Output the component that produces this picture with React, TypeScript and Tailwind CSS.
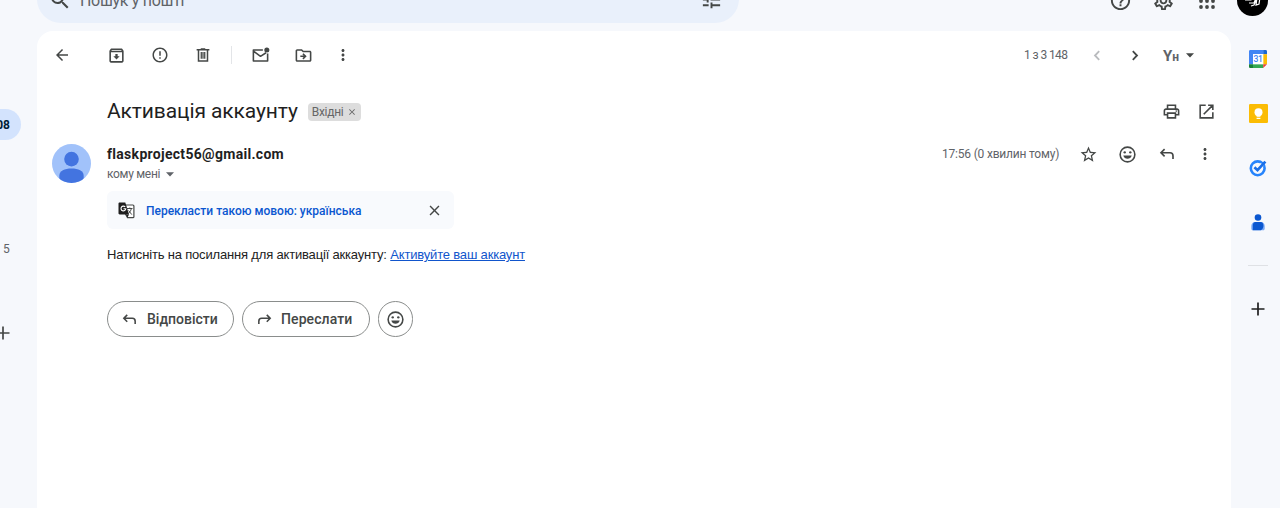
import type { ReactNode } from "react";
import {
  MdArrowBack,
  MdClose,
  MdErrorOutline,
  MdHelpOutline,
  MdMoreVert,
  MdOutlineArchive,
  MdOutlineDriveFileMove,
  MdOutlinePrint,
  MdOutlineSettings,
  MdSearch,
  MdStarOutline,
  MdTune,
} from "react-icons/md";

function Slot({ className, label, children }: { className: string; label: string; children: ReactNode }) {
  return (
    <button aria-label={label} className={`flex shrink-0 items-center justify-center ${className}`}>
      {children}
    </button>
  );
}

function Trash() {
  return (
    <svg width="18" height="18" viewBox="0 0 24 24" fill="none" stroke="currentColor" strokeWidth="2">
      <path d="M3.5 5h17M9 4h6M6 5v15h12V5" />
      <path d="M9.7 8v9M14.3 8v9M12 8v9" strokeWidth="1.7" />
    </svg>
  );
}

function Unread() {
  return (
    <svg width="19" height="19" viewBox="0 0 24 24" fill="none" stroke="currentColor" strokeWidth="2">
      <path d="M15 5H3v14h18V9.5M3 6.5l9 6.5 7-4.5" strokeLinejoin="round" />
      <circle cx="20" cy="5" r="3.2" fill="currentColor" stroke="none" />
    </svg>
  );
}

function Reply({ size, flip }: { size: number; flip?: boolean }) {
  return (
    <svg
      width={size}
      height={size}
      viewBox="0 0 24 24"
      fill="none"
      stroke="currentColor"
      strokeWidth="2.2"
      className={flip ? "-scale-x-100" : ""}
    >
      <path d="M8.8 5.500L4 10.300l4.800 4.800M4 10.300h12a4 4 0 0 1 4 4V18.500" />
    </svg>
  );
}

function Smile({ size }: { size: number }) {
  return (
    <svg width={size} height={size} viewBox="0 0 24 24" fill="currentColor">
      <circle cx="12" cy="12" r="9.300" fill="none" stroke="currentColor" strokeWidth="2" />
      <circle cx="8.500" cy="9.300" r="1.500" />
      <circle cx="15.500" cy="9.300" r="1.500" />
      <path d="M6.700 13.300h10.600c-.8 2.600-2.800 4.200-5.300 4.200s-4.500-1.600-5.300-4.200z" />
    </svg>
  );
}

function OpenNew() {
  return (
    <svg width="19" height="19" viewBox="0 0 24 24" fill="none" stroke="currentColor" strokeWidth="2">
      <path d="M11 4H4v16h16v-7M14 4h6v6M20 4L8.500 15.500" />
    </svg>
  );
}

function AppsGrid() {
  return (
    <svg width="18" height="18" viewBox="0 0 18 18" fill="currentColor">
      {[3, 9, 15].map((y) => [3, 9, 15].map((x) => <circle key={`${x}-${y}`} cx={x} cy={y} r="1.900" />))}
    </svg>
  );
}

function Chevron({ left }: { left?: boolean }) {
  return (
    <svg width="8" height="11" viewBox="0 0 8 11" fill="none" stroke="currentColor" strokeWidth="1.8">
      <path d={left ? "M6.200 1.200L2 5.500l4.200 4.300" : "M1.800 1.200L6 5.500 1.800 9.800"} />
    </svg>
  );
}

function Caret() {
  return (
    <svg width="8" height="5" viewBox="0 0 8 5" fill="currentColor">
      <path d="M0 .3h8L4 4.600z" />
    </svg>
  );
}

function Plus({ size }: { size: number }) {
  return (
    <svg width={size} height={size} viewBox="0 0 14 14" fill="none" stroke="currentColor" strokeWidth="1.7" className="shrink-0">
      <path d="M7 .5v13M.5 7h13" />
    </svg>
  );
}

function PersonAvatar() {
  return (
    <svg width="39" height="39" viewBox="0 0 40 40" className="shrink-0">
      <defs>
        <clipPath id="avatar-disc">
          <circle cx="20" cy="20" r="20" />
        </clipPath>
      </defs>
      <g clipPath="url(#avatar-disc)">
        <rect width="40" height="40" fill="#a1c2fa" />
        <circle cx="20" cy="15.500" r="7.500" fill="#4374e0" />
        <path d="M7.500 32.500c0-4.800 5.500-7.300 12.500-7.300s12.500 2.500 12.500 7.300V40h-25z" fill="#4374e0" />
      </g>
    </svg>
  );
}

function TranslateIcon() {
  return (
    <svg width="17" height="17" viewBox="0 0 17 17" className="shrink-0">
      <path d="M7.500 3h7.400c.6 0 1 .4 1 1v10.700c0 .6-.4 1-1 1H9.500L7.500 12z" fill="#fff" stroke="#444746" strokeWidth="1.200" />
      <path d="M9 6.500h5.500M11.800 5.500v1.200M13.300 6.700c-.4 2-1.700 3.800-3 4.900M10.600 8.500l3.200 4.100" stroke="#444746" strokeWidth="1" fill="none" />
      <path d="M1.700.5h5.600l3.700 12H1.700c-.7 0-1.200-.5-1.200-1.200V1.700C.5 1 1 .5 1.700.5z" fill="#1f1f1f" />
      <path d="M7.200 4.900A2.400 2.400 0 1 0 7.800 6.800H5.500" stroke="#fff" strokeWidth="1.100" fill="none" />
      <path d="M8 12.500h3l-1.500 3z" fill="#1f1f1f" />
    </svg>
  );
}

function CalendarLogo() {
  return (
    <div className="relative flex h-[18px] w-[18px] items-center justify-center">
      <svg width="18" height="18" viewBox="0 0 18 18" className="absolute inset-0">
        <path d="M1.300 0h12.900v4H4v10.200H0V1.300C0 .6.6 0 1.300 0z" fill="#4285f4" />
        <path d="M14.200 0h2.500c.7 0 1.300.6 1.300 1.300v2.900h-3.800z" fill="#1967d2" />
        <path d="M14.200 4.200H18v10h-3.800z" fill="#fbbc04" />
        <path d="M4 14.200h10.200V18H4z" fill="#34a853" />
        <path d="M0 14.200h4V18H1.300C.6 18 0 17.400 0 16.700z" fill="#188038" />
        <path d="M14.200 14.200H18L14.200 18z" fill="#ea4335" />
        <path d="M4 4h10.200v10.200H4z" fill="#fff" />
      </svg>
      <span className="relative text-[8.5px] leading-none font-medium tracking-[-0.4px] text-[#4285f4]">31</span>
    </div>
  );
}

function KeepLogo() {
  return (
    <svg width="19" height="19" viewBox="0 0 19 19">
      <rect width="19" height="19" rx="1.300" fill="#fbbc04" />
      <circle cx="9.500" cy="8.300" r="4" fill="#fff" />
      <path d="M7.600 10h3.800v2.700H7.600zM7.600 13.700h3.800v1.300H7.600z" fill="#fff" />
    </svg>
  );
}

function TasksLogo() {
  return (
    <svg width="18" height="18" viewBox="0 0 18 18" fill="none">
      <circle cx="8.700" cy="9.300" r="6.900" stroke="#2684fc" strokeWidth="2.600" />
      <path d="M8.300 10.800l5-5.500" stroke="#f6f8fc" strokeWidth="4" />
      <path d="M5.400 8.300l3.100 2.900L16.400 2.600" stroke="#1a6fe8" strokeWidth="2.700" />
    </svg>
  );
}

function ContactsLogo() {
  return (
    <svg width="14" height="17" viewBox="0 0 14 17">
      <circle cx="7" cy="3.500" r="3.300" fill="#0b57d0" />
      <path d="M4 8h6c2.300 0 3.700 1.700 3.700 4v2.800c0 .9-.6 1.500-1.500 1.500H1.800c-.9 0-1.500-.6-1.500-1.500V12C.3 9.700 1.700 8 4 8z" fill="#7baaf7" />
      <path d="M4.500 8h5c2 0 2.900 1.700 2.900 3.500 0 2.500-1 4-2.600 4.800H1.800V11.500C1.800 9.500 2.800 8 4.500 8z" fill="#0b57d0" />
    </svg>
  );
}

function Header() {
  return (
    <header className="-mt-[25px] flex h-14 shrink-0 items-start pl-[37px] text-[#444746]">
      <div className="flex h-12 w-[702px] items-center rounded-full bg-[#e9f0fb] pl-[11px]">
        <MdSearch size={24} className="mt-px shrink-0" />
        <span className="mt-[3px] ml-2 w-[400px] text-[16px] tracking-[-0.3px] whitespace-nowrap text-[#5f6368]">Пошук у пошті</span>
        <MdTune size={23} className="mr-[16px] ml-auto" />
      </div>
      <div className="ml-auto flex h-12 items-center pt-[3px]">
        <Slot label="Довідка" className="w-[43px]"><MdHelpOutline size={23} /></Slot>
        <Slot label="Налаштування" className="w-[43px]"><MdOutlineSettings size={23} /></Slot>
        <Slot label="Додатки" className="w-[43px]"><AppsGrid /></Slot>
        <div className="mr-3 ml-[9px] flex h-[31px] w-[31px] items-center justify-center rounded-full bg-black">
          <svg width="17" height="14" viewBox="0 0 17 14" fill="none" stroke="#fff" strokeWidth="1.200">
            <path d="M1 6h6l2-4M5 9h5l2-5M7 12l3-1 3-7-1 7 3-1 1-7" />
          </svg>
        </div>
      </div>
    </header>
  );
}

function Toolbar() {
  return (
    <div className="flex h-12 items-center pl-[5px] text-[#444746]">
      <Slot label="Назад" className="w-10"><MdArrowBack size={18} /></Slot>
      <Slot label="Архівувати" className="ml-[13px] w-[43px]"><MdOutlineArchive size={19} /></Slot>
      <Slot label="Спам" className="w-[43px]"><MdErrorOutline size={18} /></Slot>
      <Slot label="Видалити" className="w-[43px]"><Trash /></Slot>
      <div className="ml-[7px] h-[18px] w-px bg-[#e3e5e8]" />
      <Slot label="Непрочитане" className="ml-[7px] w-[43px]"><Unread /></Slot>
      <Slot label="Перемістити" className="w-[43px]"><MdOutlineDriveFileMove size={19} /></Slot>
      <Slot label="Більше" className="w-[35px]"><MdMoreVert size={18} /></Slot>
      <span className="ml-auto w-11 text-[12px] tracking-[-0.6px] whitespace-nowrap text-[#5f6368]">1 з 3 148</span>
      <Slot label="Новіші" className="ml-[10px] w-[38px] text-[#b9bbbe]"><Chevron left /></Slot>
      <Slot label="Старіші" className="w-[38px]"><Chevron /></Slot>
      <span className="ml-[9px] w-[23px] pt-[3px] text-[15px] leading-none font-bold text-[#5f6368]">
        Y<span className="text-[12px]">н</span>
      </span>
      <div className="mr-[37px]"><Caret /></div>
    </div>
  );
}

function Message() {
  return (
    <>
      <div className="flex h-[65px] items-center pl-[70px]">
        <h1 className="text-[21px] tracking-[-0.1px] whitespace-nowrap text-[#1f1f1f]">Активація аккаунту</h1>
        <div className="ml-[10px] flex h-[18px] w-[53px] shrink-0 items-center rounded-[4px] bg-[#dddddd] pl-1 text-[12px] tracking-[-0.3px] whitespace-nowrap text-[#666]">
          <span>Вхідні</span>
          <MdClose size={10} className="ml-[4px] shrink-0" />
        </div>
        <div className="mr-[7px] ml-auto flex text-[#444746]">
          <Slot label="Друк" className="w-9"><MdOutlinePrint size={19} /></Slot>
          <Slot label="Нове вікно" className="w-[35px]"><OpenNew /></Slot>
        </div>
      </div>
      <div className="flex h-[46px] pl-[15px]">
        <PersonAvatar />
        <div className="ml-4 whitespace-nowrap">
          <p className="h-5 text-[14px] leading-5 font-bold tracking-[0.3px] text-[#1f1f1f]">flaskproject56@gmail.com</p>
          <div className="flex h-5 items-center text-[12px] tracking-[-0.3px] text-[#5f6368]">
            <span className="w-[59px]">кому мені</span>
            <Caret />
          </div>
        </div>
        <div className="mr-[7px] ml-auto flex h-5 items-center text-[#444746]">
          <span className="mr-[10px] w-[117px] text-[12px] tracking-[-0.2px] whitespace-nowrap text-[#5f6368]">17:56 (0 хвилин тому)</span>
          <Slot label="Позначити" className="w-[39px]"><MdStarOutline size={19} /></Slot>
          <Slot label="Реакція" className="w-[39px]"><Smile size={19} /></Slot>
          <Slot label="Відповісти" className="w-[39px]"><Reply size={18} /></Slot>
          <Slot label="Більше" className="w-[38px]"><MdMoreVert size={18} /></Slot>
        </div>
      </div>
      <div className="ml-[70px]">
        <div className="mt-px flex h-[38px] w-[347px] items-center rounded-[6px] bg-[#f8fafd] pl-[11px]">
          <TranslateIcon />
          <span className="mt-px ml-[11px] text-[12px] font-medium whitespace-nowrap text-[#0b57d0]">Перекласти такою мовою: українська</span>
          <MdClose size={17} className="mr-[11px] ml-auto text-[#444746]" />
        </div>
        <p className="mt-[17px] h-[18px] font-['Liberation_Sans',Arial,sans-serif] text-[13px] leading-[18px] tracking-[-0.175px] whitespace-nowrap text-[#222]">
          Натисніть на посилання для активації аккаунту: <a href="#activate" className="text-[#1155cc] underline">Активуйте ваш аккаунт</a>
        </p>
        <div className="mt-[37px] flex gap-2 text-[14px] font-medium whitespace-nowrap text-[#444746]">
          <button className="flex h-9 w-[127px] items-center rounded-full border border-[#8a8d8c] pl-[13px]">
            <Reply size={17} /><span className="ml-[9px]">Відповісти</span>
          </button>
          <button className="flex h-9 w-32 items-center rounded-full border border-[#8a8d8c] pl-[13px]">
            <Reply size={17} flip /><span className="ml-2 tracking-[0.1px]">Переслати</span>
          </button>
          <button aria-label="Додати реакцію" className="flex h-9 w-[35px] items-center justify-center rounded-full border border-[#8a8d8c]">
            <Smile size={19} />
          </button>
        </div>
      </div>
    </>
  );
}

export default function App() {
  return (
    <div className="flex h-[508px] w-[1280px] flex-col overflow-hidden bg-[#f6f8fc] font-[Roboto,'Noto_Sans',sans-serif]">
      <Header />
      <div className="flex min-h-0 flex-1">
        <aside className="flex w-[37px] shrink-0 flex-col overflow-hidden text-[12px]">
          <div className="mt-[78px] flex h-[31px] w-[21px] items-center justify-end rounded-r-full bg-[#d3e3fd] pr-[11px] font-bold text-[#001d35]">08</div>
          <span className="mt-[100px] ml-[3px] h-[18px] leading-[18px] text-[#5f6368]">5</span>
          <div className="mt-[68px] -ml-[4px] text-[#444746]"><Plus size={14} /></div>
        </aside>
        <main className="w-[1194px] shrink-0 rounded-t-2xl bg-white">
          <Toolbar />
          <Message />
        </main>
        <aside className="flex w-[49px] shrink-0 flex-col items-center pl-[5px]">
          <div className="mt-[19px] flex h-[18px] items-center"><CalendarLogo /></div>
          <div className="mt-[36px] flex h-[19px] items-center"><KeepLogo /></div>
          <div className="mt-[36px] flex h-[18px] items-center"><TasksLogo /></div>
          <div className="mt-[37px] flex h-[17px] items-center"><ContactsLogo /></div>
          <div className="mt-[34px] h-px w-5 bg-[#dfe1e5]" />
          <div className="mt-[36px] text-[#1f1f1f]"><Plus size={14} /></div>
        </aside>
      </div>
    </div>
  );
}
